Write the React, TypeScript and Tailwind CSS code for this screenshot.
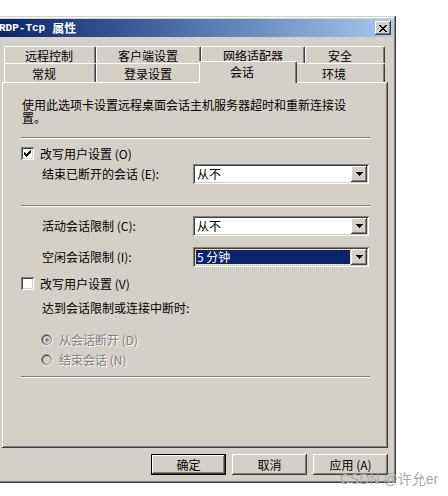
import React from 'react';

const RAISED =
  'shadow-[inset_-1px_-1px_#404040,inset_1px_1px_#ffffff,inset_-2px_-2px_#808080,inset_2px_2px_#d4d0c8]';
const SUNKEN =
  'shadow-[inset_1px_1px_#808080,inset_-1px_-1px_#ffffff,inset_2px_2px_#404040,inset_-2px_-2px_#d4d0c8]';

function Arrow() {
  return (
    <svg width="7" height="4" viewBox="0 0 7 4" shapeRendering="crispEdges">
      <path d="M0 0h7v1H0zM1 1h5v1H1zM2 2h3v1H2zM3 3h1v1H3z" fill="#000" />
    </svg>
  );
}

function Combo({ value, selected }: { value: string; selected?: boolean }) {
  return (
    <div className={`w-[176px] h-[20px] bg-white p-[2px] flex ${SUNKEN}`}>
      <div className="flex-1 flex items-stretch">
        {selected ? (
          <div className="flex-1 m-[1px] bg-[#0a246a] text-white flex items-center pl-[1px] outline-1 outline-dotted outline-[#f0c060]">
            {value}
          </div>
        ) : (
          <div className="flex-1 flex items-center pl-[2px]">{value}</div>
        )}
      </div>
      <div className={`w-[16px] h-[16px] bg-[#d4d0c8] flex items-center justify-center ${RAISED}`}>
        <Arrow />
      </div>
    </div>
  );
}

function Checkbox({ checked }: { checked?: boolean }) {
  return (
    <div className={`w-[13px] h-[13px] bg-white flex items-center justify-center ${SUNKEN}`}>
      {checked && (
        <svg width="7" height="7" viewBox="0 0 7 7" shapeRendering="crispEdges">
          <path
            d="M0 2h1v3H0zM1 3h1v3H1zM2 4h1v3H2zM3 3h1v3H3zM4 2h1v3H4zM5 1h1v3H5zM6 0h1v3H6z"
            fill="#000"
          />
        </svg>
      )}
    </div>
  );
}

function Radio({ checked }: { checked?: boolean }) {
  return (
    <svg width="12" height="12" viewBox="0 0 12 12">
      <circle cx="6" cy="6" r="6" fill="#ffffff" />
      <circle cx="5.6" cy="5.6" r="5.6" fill="#808080" />
      <circle cx="6" cy="6" r="5" fill="#d4d0c8" />
      <circle cx="5.7" cy="5.7" r="4.7" fill="#404040" />
      <circle cx="6" cy="6" r="4" fill="#d4d0c8" />
      {checked && <circle cx="6" cy="6" r="1.8" fill="#808080" />}
    </svg>
  );
}

function Sep() {
  return <div className="h-[2px] border-t border-t-[#808080] border-b border-b-white w-[349px]" />;
}

function Tab({
  label,
  w,
  off,
  h,
  pt,
}: {
  label: string;
  w: number;
  off: number;
  h: number;
  pt: number;
}) {
  return (
    <div
      className="bg-[#d4d0c8] border-t border-l border-white border-r border-r-[#404040] rounded-tl-[2px] rounded-tr-[2px] shadow-[inset_-1px_0_#808080] whitespace-nowrap leading-[12px]"
      style={{ width: w, height: h, paddingLeft: off, paddingTop: pt }}
    >
      {label}
    </div>
  );
}

export default function App() {
  return (
    <div className="w-[448px] h-[496px] bg-white relative overflow-hidden font-['Noto_Sans_CJK_SC','Noto_Sans',sans-serif] text-[12px] leading-[12px] text-black">
      <div className="ml-[-6px] mt-[16px] w-[402px] h-[467px] bg-[#d4d0c8] p-[3px] flex flex-col shadow-[inset_-1px_-1px_#404040,inset_1px_1px_#d4d0c8,inset_-2px_-2px_#808080,inset_2px_2px_#ffffff]">
        {/* Title bar */}
        <div className="h-[18px] bg-linear-to-r from-[#0a246a] to-[#a6caf0] flex items-center pl-[2px] pr-[2px]">
          <span className="text-white font-bold font-['Liberation_Mono',monospace] text-[11px] leading-[12px]">
            RDP-Tcp
          </span>
          <span className="text-white font-bold text-[12px] leading-[12px] ml-[7px]">属性</span>
          <div className={`ml-auto w-[16px] h-[14px] bg-[#d4d0c8] flex items-center justify-center ${RAISED}`}>
            <svg width="8" height="7" viewBox="0 0 8 7" shapeRendering="crispEdges">
              <path
                d="M0 0h2v1H0zM6 0h2v1H6zM1 1h2v1H1zM5 1h2v1H5zM2 2h4v1H2zM3 3h2v1H3zM2 4h4v1H2zM1 5h2v1H1zM5 5h2v1H5zM0 6h2v1H0zM6 6h2v1H6z"
                fill="#000"
              />
            </svg>
          </div>
        </div>

        {/* Tab control */}
        <div className="mt-[9px] ml-[5px] w-[386px] flex flex-col">
          <div className="flex h-[17px] pl-[2px]">
            <Tab label="远程控制" w={92} off={20} h={17} pt={3} />
            <Tab label="客户端设置" w={105} off={21} h={17} pt={3} />
            <Tab label="网络适配器" w={104} off={21} h={17} pt={3} />
            <Tab label="安全" w={80} off={22} h={17} pt={3} />
          </div>
          <div className="flex h-[19px] pl-[2px]">
            <Tab label="常规" w={92} off={27} h={19} pt={4} />
            <Tab label="登录设置" w={105} off={27} h={19} pt={4} />
            <div className="relative z-10 ml-[-2px] mr-[-2px] mt-[-2px] w-[98px] h-[22px] bg-[#d4d0c8] border-t border-l border-white border-r border-r-[#404040] rounded-tl-[2px] rounded-tr-[2px] shadow-[inset_-1px_0_#808080] pl-[30px] pt-[4px] leading-[12px]">
              会话
            </div>
            <Tab label="环境" w={90} off={26} h={19} pt={4} />
          </div>

          {/* Panel */}
          <div className="h-[366px] w-[386px] shadow-[inset_-1px_-1px_#404040,inset_1px_1px_#ffffff,inset_-2px_-2px_#808080] pl-[19px] pt-[16px] flex flex-col">
            <div className="pl-[1px] leading-[13px]">
              使用此选项卡设置远程桌面会话主机服务器超时和重新连接设
              <br />
              置。
            </div>
            <div className="mt-[13px]">
              <Sep />
            </div>
            <div className="mt-[8px] flex items-center h-[13px]">
              <Checkbox checked />
              <span className="ml-[6px]">改写用户设置 (O)</span>
            </div>
            <div className="mt-[4px] flex items-center h-[20px]">
              <div className="w-[172px] pl-[21px]">结束已断开的会话 (E):</div>
              <Combo value="从不" />
            </div>
            <div className="mt-[21px]">
              <Sep />
            </div>
            <div className="mt-[9px] flex items-center h-[20px]">
              <div className="w-[172px] pl-[21px]">活动会话限制 (C):</div>
              <Combo value="从不" />
            </div>
            <div className="mt-[11px] flex items-center h-[20px]">
              <div className="w-[172px] pl-[21px]">空闲会话限制 (I):</div>
              <Combo value="5 分钟" selected />
            </div>
            <div className="mt-[10px] flex items-center h-[13px]">
              <Checkbox />
              <span className="ml-[6px]">改写用户设置 (V)</span>
            </div>
            <div className="mt-[12px] pl-[21px]">达到会话限制或连接中断时:</div>
            <div className="mt-[20px] flex items-center h-[12px] pl-[20px]">
              <Radio checked />
              <span className="ml-[6px] text-[#808080] [text-shadow:1px_1px_0_#ffffff]">从会话断开 (D)</span>
            </div>
            <div className="mt-[8px] flex items-center h-[12px] pl-[20px]">
              <Radio />
              <span className="ml-[6px] text-[#808080] [text-shadow:1px_1px_0_#ffffff]">结束会话 (N)</span>
            </div>
            <div className="mt-[10px]">
              <Sep />
            </div>
          </div>
        </div>

        {/* Buttons */}
        <div className="mt-[6px] flex justify-end gap-[6px] pr-[5px]">
          <div className="w-[75px] h-[21px] bg-[#d4d0c8] flex items-center justify-center shadow-[inset_0_0_0_1px_#000000,inset_-2px_-2px_#404040,inset_2px_2px_#ffffff,inset_-3px_-3px_#808080]">
            确定
          </div>
          <div className={`w-[75px] h-[21px] bg-[#d4d0c8] flex items-center justify-center ${RAISED}`}>取消</div>
          <div className={`w-[75px] h-[21px] bg-[#d4d0c8] flex items-center justify-center ${RAISED}`}>
            应用 (A)
          </div>
        </div>
      </div>

      <div className="absolute left-[340px] top-[472px] font-['Liberation_Sans','Noto_Sans_CJK_SC',sans-serif] text-[14px] leading-[15px] text-[#a8a8a8] whitespace-nowrap">
        CSDN @许允er
      </div>
    </div>
  );
}
